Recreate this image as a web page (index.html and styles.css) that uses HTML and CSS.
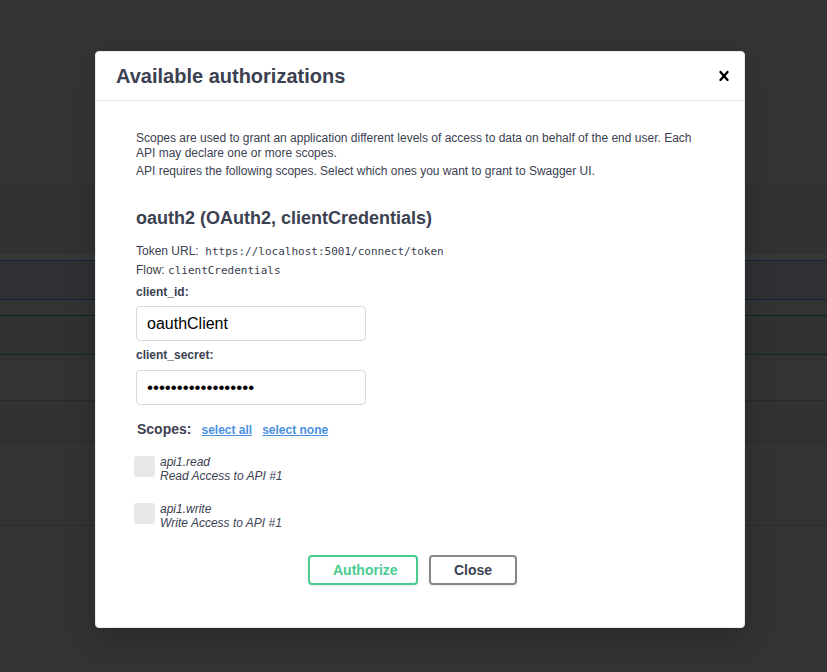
FILE: index.html
```html
<!DOCTYPE html>
<html>
<head>
<meta charset="utf-8">
<link rel="stylesheet" href="styles.css">
</head>
<body>
<div class="backdrop">
  <div class="bg-row r-top"></div>
  <div class="bg-row r-a"></div>
  <div class="bg-row r-band"></div>
  <div class="bg-row r-get"></div>
  <div class="bg-row r-gap"></div>
  <div class="bg-row r-post"></div>
  <div class="bg-row r-gap2"></div>
  <div class="bg-row r-b"></div>
  <div class="bg-row r-c"></div>
  <div class="bg-row r-rest"></div>
</div>

<div class="modal">
  <div class="modal-header">
    <h3>Available authorizations</h3>
    <button class="close-modal" type="button" aria-label="Close">
      <svg width="20" height="20" viewBox="0 0 20 20"><path fill="#000" d="M14.348 14.849c-.469.469-1.229.469-1.697 0L10 11.819l-2.651 3.029c-.469.469-1.229.469-1.697 0-.469-.469-.469-1.229 0-1.697l2.758-3.15-2.759-3.152c-.469-.469-.469-1.228 0-1.697.469-.469 1.228-.469 1.697 0L10 8.183l2.651-3.031c.469-.469 1.228-.469 1.697 0 .469.469.469 1.229 0 1.697l-2.758 3.152 2.758 3.150c.469.469.469 1.229 0 1.698z"/></svg>
    </button>
  </div>
  <div class="modal-content">
    <div class="auth-container">
      <div class="scope-def">
        <p>Scopes are used to grant an application different levels of access to data on behalf of the end user. Each API may declare one or more scopes.</p>
        <p>API requires the following scopes. Select which ones you want to grant to Swagger UI.</p>
      </div>
      <h4>oauth2 (OAuth2, clientCredentials)</h4>
      <p class="meta">Token URL:<code>&nbsp;https://localhost:5001/connect/token</code></p>
      <p class="meta">Flow: <code>clientCredentials</code></p>
      <div class="field">
        <label class="field-label">client_id:</label>
        <input class="text-input" type="text" value="oauthClient">
      </div>
      <div class="field second-field">
        <label class="field-label">client_secret:</label>
        <input class="text-input secret" type="password" value="oauthClientSecret1">
      </div>
      <div class="scopes-head">
        <span class="scopes-title">Scopes:</span>
        <a class="scope-link">select all</a>
        <a class="scope-link">select none</a>
      </div>
      <div class="scope-item">
        <span class="check"></span>
        <div class="scope-text">
          <p class="scope-name">api1.read</p>
          <p class="scope-desc">Read Access to API #1</p>
        </div>
      </div>
      <div class="scope-item second">
        <span class="check"></span>
        <div class="scope-text">
          <p class="scope-name">api1.write</p>
          <p class="scope-desc">Write Access to API #1</p>
        </div>
      </div>
      <div class="btn-wrapper">
        <button class="btn btn-auth" type="button">Authorize</button>
        <button class="btn btn-close" type="button">Close</button>
      </div>
    </div>
  </div>
</div>
</body>
</html>
```

FILE: styles.css
```css
* { box-sizing: border-box; }
html, body {
  margin: 0;
  padding: 0;
  width: 827px;
  height: 672px;
  overflow: hidden;
  background: #333;
  font-family: "Liberation Sans", Arial, sans-serif;
  color: #3b4151;
}

.backdrop {
  display: flex;
  flex-direction: column;
  height: 672px;
}
.bg-row { width: 100%; }
.r-top { height: 186px; background: #343434; border-bottom: 1px solid #2e2e2e; }
.r-a { height: 68px; background: #323232; }
.r-band { height: 6px; background: #373737; }
.r-get { height: 40px; background: #303134; border-top: 1px solid #13233a; border-bottom: 1px solid #13233a; }
.r-gap { height: 15px; background: #333; }
.r-post { height: 40px; background: #2f3231; border-top: 1px solid #0f291d; border-bottom: 1px solid #0f291d; }
.r-gap2 { height: 45px; background: #333; }
.r-b { height: 42px; background: #323232; border-top: 1px solid #2a2a2a; border-bottom: 1px solid #2a2a2a; }
.r-c { height: 84px; background: #333; border-bottom: 1px solid #2b2b2b; }
.r-rest { flex: 1; background: #333; }

.modal {
  position: absolute;
  top: 51px;
  left: 95px;
  width: 650px;
  background: #fff;
  border: 1px solid #ebebeb;
  border-radius: 4px;
  box-shadow: 0 10px 30px 0 rgba(0, 0, 0, 0.2);
}

.modal-header {
  display: flex;
  align-items: center;
  padding: 12px 0;
  border-bottom: 1px solid #ebebeb;
}
.modal-header h3 {
  flex: 1;
  margin: 0;
  padding: 0 20px;
  font-size: 20px;
  line-height: 24px;
  font-weight: 700;
  color: #3b4151;
}
.close-modal {
  background: none;
  border: none;
  padding: 0 10px;
  height: 20px;
  display: flex;
  align-items: center;
}

.modal-content {
  padding: 20px;
}
.auth-container {
  padding: 10px 20px 22px 20px;
}

.scope-def p {
  margin: 0 0 3px 0;
  font-size: 12px;
  line-height: 15px;
  color: #3b4151;
}

h4 {
  margin: 28px 0 13px 0;
  font-size: 18px;
  line-height: 22px;
  font-weight: 700;
  color: #3b4151;
}

.meta {
  margin: 0;
  font-size: 12px;
  line-height: 19px;
  color: #3b4151;
}
.meta code {
  font-family: "DejaVu Sans Mono", monospace;
  font-size: 11px;
  color: #3b4151;
}

.field { display: flex; flex-direction: column; align-items: flex-start; }
.field-label {
  margin-top: 5px;
  font-size: 12px;
  line-height: 15px;
  font-weight: 700;
  color: #3b4151;
}
.second-field .field-label { margin-top: 7px; }
.text-input {
  margin-top: 6px;
  width: 230px;
  height: 35px;
  padding: 8px 10px;
  border: 1px solid #d9d9d9;
  border-radius: 4px;
  background: #fff;
  font-family: "Liberation Sans", Arial, sans-serif;
  font-size: 16px;
  color: #000;
}
.second-field .text-input { margin-top: 7px; }
.secret {
  font-size: 17px;
}

.scopes-head {
  display: flex;
  align-items: baseline;
  margin-top: 16px;
  padding-left: 1px;
}
.scopes-title {
  font-size: 14px;
  line-height: 17px;
  font-weight: 700;
  color: #3b4151;
  margin-right: 10px;
}
.scope-link {
  font-size: 12px;
  font-weight: 700;
  color: #4990e2;
  text-decoration: underline;
  margin-right: 10px;
}

.scope-item {
  display: flex;
  align-items: flex-start;
  margin-top: 17px;
  margin-left: -2px;
}
.scope-item.second { margin-top: 19px; }
.check {
  width: 21px;
  height: 21px;
  margin-top: 1px;
  margin-right: 5px;
  border-radius: 3px;
  background: #e8e8e8;
  flex: none;
}
.scope-text p {
  margin: 0;
  font-size: 12px;
  line-height: 14px;
  font-style: italic;
  color: #3b4151;
}

.btn-wrapper {
  display: flex;
  justify-content: center;
  gap: 11px;
  margin-top: 25px;
  padding-right: 15px;
}
.btn {
  font-family: "Liberation Sans", Arial, sans-serif;
  font-size: 14px;
  font-weight: 700;
  line-height: 17px;
  padding: 5px 23px 4px 23px;
  border-radius: 4px;
  background: transparent;
  box-shadow: 0 1px 2px rgba(0, 0, 0, 0.1);
}
.btn-auth {
  width: 110px;
  border: 2px solid #49cc90;
  color: #49cc90;
}
.btn-close {
  width: 88px;
  border: 2px solid #888;
  color: #3b4151;
}
```
